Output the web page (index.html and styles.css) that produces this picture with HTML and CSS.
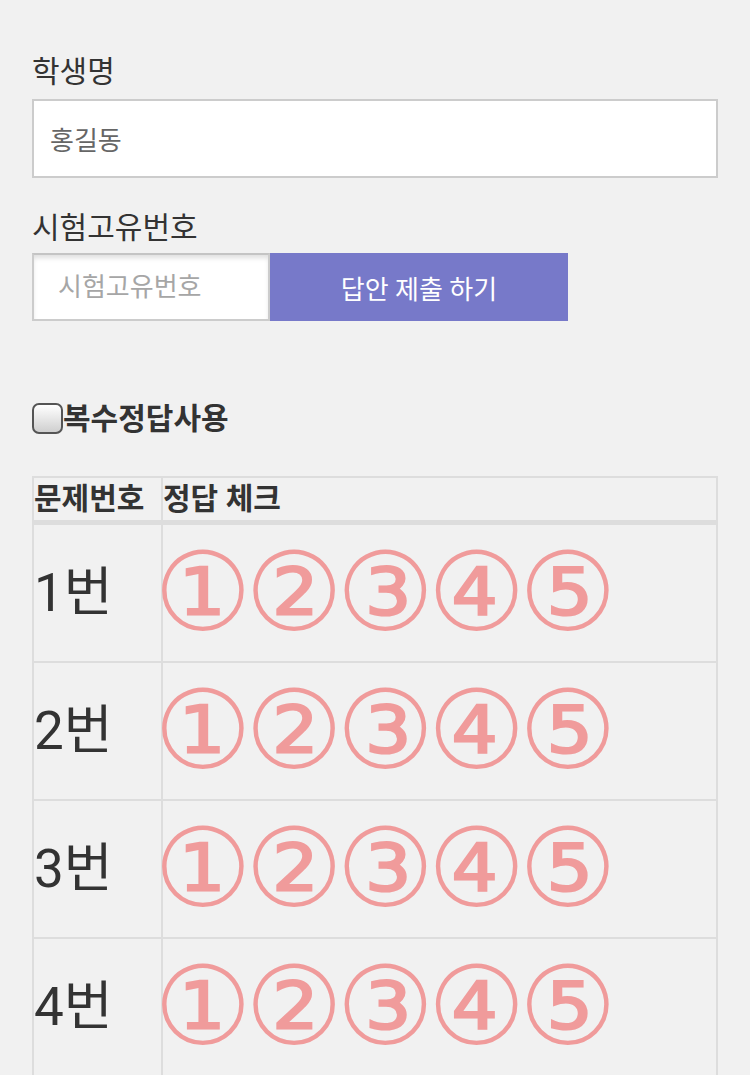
FILE: index.html
```html
<!DOCTYPE html>
<html lang="ko">
<head>
<meta charset="utf-8">
<title>답안 제출</title>
<link rel="stylesheet" href="styles.css">
</head>
<body>
<main class="page">
  <label class="field-label" for="name">학생명</label>
  <input class="text-input" id="name" type="text" value="홍길동">

  <label class="field-label field-label--second" for="code">시험고유번호</label>
  <div class="submit-row">
    <input class="code-input" id="code" type="text" placeholder="시험고유번호">
    <button class="submit-btn" type="button">답안 제출 하기</button>
  </div>

  <label class="multi-row">
    <input class="multi-check" type="checkbox">
    <span class="multi-text">복수정답사용</span>
  </label>

  <table class="answer-table">
    <thead>
      <tr>
        <th class="col-num">문제번호</th>
        <th class="col-check">정답 체크</th>
      </tr>
    </thead>
    <tbody>
      <tr>
        <td class="q-num">1번</td>
        <td class="q-choices"><span class="choice">①</span><span class="choice">②</span><span class="choice">③</span><span class="choice">④</span><span class="choice">⑤</span></td>
      </tr>
      <tr>
        <td class="q-num">2번</td>
        <td class="q-choices"><span class="choice">①</span><span class="choice">②</span><span class="choice">③</span><span class="choice">④</span><span class="choice">⑤</span></td>
      </tr>
      <tr>
        <td class="q-num">3번</td>
        <td class="q-choices"><span class="choice">①</span><span class="choice">②</span><span class="choice">③</span><span class="choice">④</span><span class="choice">⑤</span></td>
      </tr>
      <tr>
        <td class="q-num">4번</td>
        <td class="q-choices"><span class="choice">①</span><span class="choice">②</span><span class="choice">③</span><span class="choice">④</span><span class="choice">⑤</span></td>
      </tr>
    </tbody>
  </table>
</main>
</body>
</html>
```

FILE: styles.css
```css
html, body {
  margin: 0;
  padding: 0;
  background: #f1f1f1;
}

body {
  font-family: Roboto, "Noto Sans CJK KR", sans-serif;
  color: #333333;
  overflow: hidden;
}

.page {
  padding: 54px 32px 0 32px;
  display: flex;
  flex-direction: column;
  align-items: flex-start;
}

.field-label {
  display: block;
  font-size: 30px;
  line-height: 36px;
  height: 36px;
  margin-bottom: 9px;
  color: #333333;
}

.field-label--second {
  margin-top: 32px;
  margin-bottom: 7px;
}

.text-input {
  box-sizing: border-box;
  width: 686px;
  height: 79px;
  margin: 0;
  border: 2px solid #cccccc;
  background: #ffffff;
  padding: 0 0 0 16px;
  font-family: Roboto, "Noto Sans CJK KR", sans-serif;
  font-size: 26px;
  color: #666666;
  outline: none;
}

.submit-row {
  display: flex;
  height: 68px;
}

.code-input {
  box-sizing: border-box;
  width: 238px;
  height: 68px;
  margin: 0;
  border: 2px solid #cccccc;
  border-top-color: #c4c4c4;
  background: #ffffff;
  box-shadow: inset 0 4px 5px -1px rgba(0, 0, 0, 0.13);
  padding: 0 0 0 24px;
  font-family: Roboto, "Noto Sans CJK KR", sans-serif;
  font-size: 26px;
  color: #666666;
  outline: none;
}

.code-input::placeholder {
  color: #a6a6a6;
}

.submit-btn {
  box-sizing: border-box;
  width: 298px;
  height: 68px;
  margin: 0;
  border: none;
  background: #7779c9;
  color: #ffffff;
  font-family: Roboto, "Noto Sans CJK KR", sans-serif;
  font-size: 26px;
  padding: 0;
}

.multi-row {
  display: flex;
  align-items: center;
  margin-top: 82px;
  height: 31px;
}

.multi-check {
  appearance: none;
  -webkit-appearance: none;
  box-sizing: border-box;
  width: 31px;
  height: 31px;
  margin: 0;
  border: 2px solid #555555;
  border-radius: 7px;
  background: linear-gradient(#ffffff, #cfcfcf);
}

.multi-text {
  font-size: 30px;
  font-weight: bold;
  line-height: 31px;
  color: #333333;
}

.answer-table {
  margin-top: 42px;
  width: 686px;
  border-spacing: 0;
  border-top: 2px solid #dddddd;
  border-left: 2px solid #dddddd;
  table-layout: fixed;
}

.answer-table th,
.answer-table td {
  padding: 0;
  border-right: 2px solid #dddddd;
  border-bottom: 2px solid #dddddd;
  text-align: left;
  vertical-align: middle;
}

.answer-table th {
  height: 42px;
  font-size: 30px;
  font-weight: bold;
  line-height: 36px;
  color: #333333;
  border-bottom-width: 5px;
}

.col-num {
  width: 127px;
}

.answer-table td {
  height: 136px;
}

.q-num {
  font-size: 53px;
  line-height: 60px;
  color: #333333;
  padding-bottom: 8px;
}

.q-choices {
  white-space: nowrap;
  text-indent: -9px;
  padding-bottom: 6px;
}

.choice {
  font-family: "DejaVu Sans", sans-serif;
  font-size: 109px;
  line-height: 100px;
  letter-spacing: -6.5px;
  color: #f09b9b;
}
```
